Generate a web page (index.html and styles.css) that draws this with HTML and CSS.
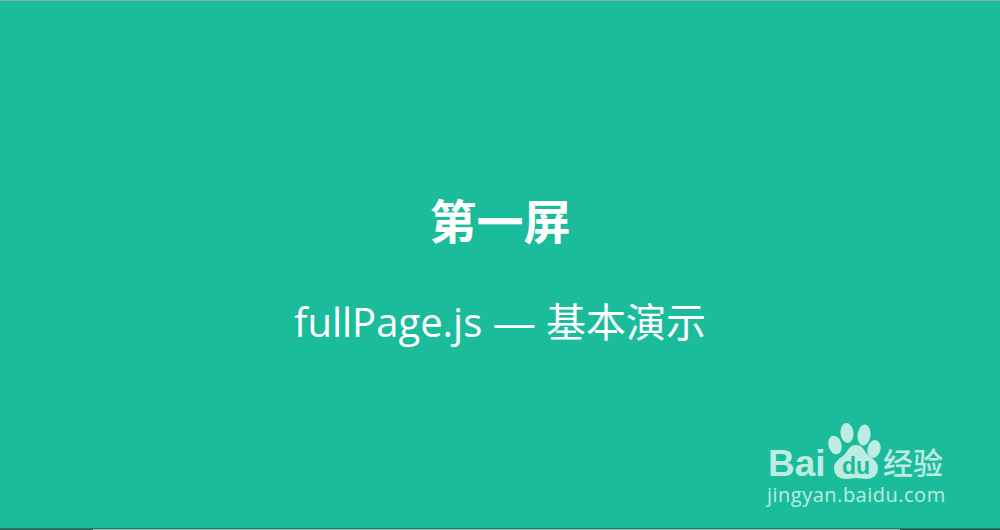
FILE: index.html
```html
<!DOCTYPE html>
<html lang="zh-CN">
<head>
<meta charset="utf-8">
<title>fullPage.js — 基本演示</title>
<link rel="stylesheet" href="styles.css">
</head>
<body>
<div class="page">
  <div class="top-edge"></div>
  <section class="screen">
    <h1 class="title">第一屏</h1>
    <p class="subtitle">fullPage.js <span class="dash">—</span> 基本演示</p>
    <div class="watermark">
      <div class="wm-row">
        <span class="wm-bai">Bai</span>
        <svg class="wm-paw" viewBox="0 0 54 57" aria-hidden="true">
          <ellipse cx="7" cy="22" rx="6.5" ry="9.5" transform="rotate(-14 7 22)"/>
          <ellipse cx="19" cy="10" rx="6.5" ry="10" transform="rotate(-6 19 10)"/>
          <ellipse cx="36" cy="12" rx="6.5" ry="10.5" transform="rotate(6 36 12)"/>
          <ellipse cx="46" cy="26" rx="6.5" ry="9" transform="rotate(14 46 26)"/>
          <path d="M28 22c6 0 8 5 11 9 4 4 11 7 11 14 0 8-6 11-12 11-4 0-7-1-10-1s-6 1-10 1c-6 0-12-3-12-11 0-7 7-10 11-14 3-4 5-9 11-9z"/>
          <text class="wm-du" x="28" y="51" text-anchor="middle">du</text>
        </svg>
        <span class="wm-cn">经验</span>
      </div>
      <div class="wm-url">jingyan.baidu.com</div>
    </div>
  </section>
  <div class="bottom-edge">
    <span class="edge-dark"></span>
    <span class="edge-light"></span>
    <span class="edge-dark edge-end"></span>
  </div>
</div>
</body>
</html>
```

FILE: styles.css
```css
* { box-sizing: border-box; margin: 0; padding: 0; }
html, body { width: 100%; height: 100%; overflow: hidden; }
.page {
  width: 1000px;
  height: 530px;
  display: flex;
  flex-direction: column;
  background: #1bbc9b;
}
.top-edge { height: 1px; background: #8fa8a2; }
.screen {
  position: relative;
  flex: 1;
  display: flex;
  flex-direction: column;
  align-items: center;
  color: #fff;
  font-family: "Open Sans", "Noto Sans CJK SC", sans-serif;
  padding-top: 185px;
}
.title {
  font-family: "Noto Sans CJK SC", sans-serif;
  font-size: 47px;
  font-weight: 700;
  line-height: 66px;
}
.subtitle {
  font-size: 40px;
  font-weight: 400;
  line-height: 56px;
  margin-top: 42px;
  white-space: nowrap;
  word-spacing: 1.5px;
}
.dash { font-family: "Liberation Sans", sans-serif; }
.watermark {
  position: absolute;
  left: 767px;
  top: 422px;
  color: #bdece2;
  font-family: "Liberation Sans", "Noto Sans CJK SC", sans-serif;
}
.wm-row { display: flex; align-items: flex-end; height: 57px; padding-left: 1px; }
.wm-bai {
  width: 60px;
  font-size: 37px;
  font-weight: 700;
  line-height: 40px;
  margin-bottom: -4px;
}
.wm-paw { width: 54px; height: 57px; fill: #bdece2; flex: none; }
.wm-du { font-family: "Liberation Sans", sans-serif; font-size: 23px; font-weight: 700; fill: #1bbc9b; }
.wm-cn { font-size: 30px; font-weight: 500; line-height: 38px; margin-left: 1px; white-space: nowrap; font-family: "Noto Sans CJK SC", sans-serif; }
.wm-url { font-family: "Open Sans", sans-serif; font-size: 20px; line-height: 24px; margin-top: 3px; letter-spacing: 0.5px; white-space: nowrap; }
.bottom-edge { height: 2px; display: flex; border-top: 1px solid #17806b; }
.edge-dark { width: 93px; background: #3d5a55; }
.edge-light { flex: 1; background: #9fb5b2; }
.edge-end { width: 100px; background: #2c4f47; }
```
